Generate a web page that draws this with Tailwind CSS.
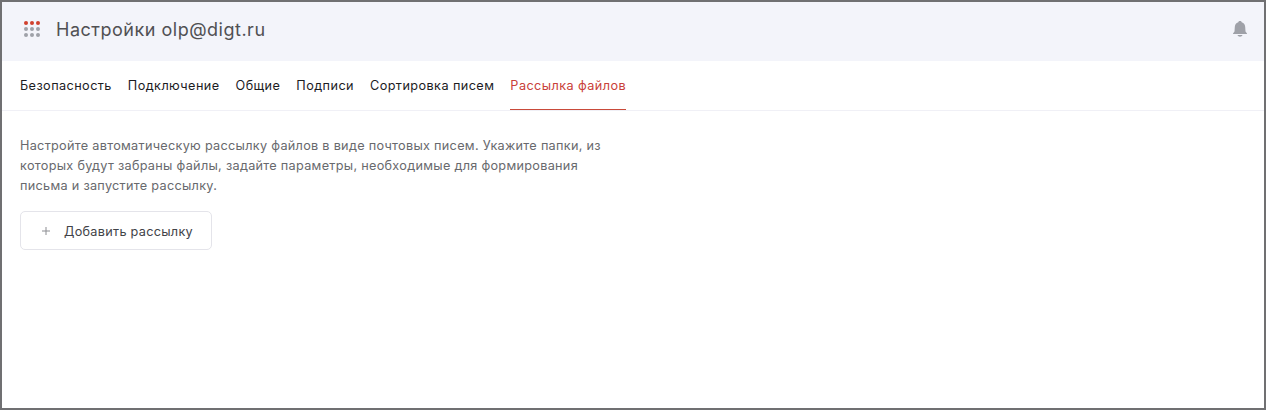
<!DOCTYPE html>
<html lang="ru"><head><meta charset="utf-8"><title>Настройки</title>
<script src="https://cdn.jsdelivr.net/npm/@tailwindcss/browser@4"></script></head>
<body class="h-screen overflow-hidden bg-white font-['Inter',sans-serif]">
<div class="h-[410px] border-2 border-[#707072]">
<header class="flex h-[59px] items-start bg-[#f3f4fa] pl-[22px] pr-[17px] pt-[19px]">
<svg class="size-4" viewBox="0 0 16 16"><g fill="#d0402e"><circle cx="2" cy="2" r="2"/><circle cx="8" cy="2" r="2"/><circle cx="14" cy="2" r="2"/></g><g fill="#9fa1a8"><circle cx="2" cy="8" r="2"/><circle cx="8" cy="8" r="2"/><circle cx="14" cy="8" r="2"/><circle cx="2" cy="14" r="2"/><circle cx="8" cy="14" r="2"/><circle cx="14" cy="14" r="2"/></g></svg>
<h1 class="-mt-[3px] ml-4 text-[18px] leading-6 tracking-[0.51px] text-[#505053]">Настройки olp@digt.ru</h1>
<svg class="ml-auto h-4 w-3.5" viewBox="0 0 14 16" fill="#9fa1a8"><path d="M7 0C6 0 5.500.5 5.300 1.200 3 1.900 1.900 3.700 1.800 6L1.500 10.500 0 12.500V13h14v-.5L12.500 10.500 12.200 6C12.100 3.700 11 1.900 8.700 1.200 8.500.5 8 0 7 0zM4.500 14c.4 1.100 1.300 1.700 2.500 1.700s2.100-.6 2.500-1.700z"/></svg>
</header>
<nav class="flex h-[50px] gap-4 border-b border-[#f0f0f6] pl-[18px] text-[12.700px] leading-[49px] tracking-[0.415px] text-[#1c1c1f]">
<a>Безопасность</a><a>Подключение</a><a>Общие</a><a>Подписи</a><a>Сортировка писем</a><a class="h-[49px] border-b border-[#c94a3a] text-[#c9413a]">Рассылка файлов</a>
</nav>
<main class="pl-[18px] pt-[25px]">
<p class="text-[12.700px] leading-5 tracking-[0.285px] text-[#68696d]">Настройте автоматическую рассылку файлов в виде почтовых писем. Укажите папки, из<br>которых будут забраны файлы, задайте параметры, необходимые для формирования<br>письма и запустите рассылку.</p>
<button class="mt-[15px] flex h-[39px] w-48 items-center rounded-[5px] border border-[#e4e4ea] pl-[21px] pt-px text-[12.700px] tracking-[0.28px] text-[#424348]"><svg class="mr-[14px] size-2" viewBox="0 0 8 8" stroke="#8c8d92"><path d="M4 0v8M0 4h8"/></svg><span class="pt-0.5">Добавить рассылку</span></button>
</main></div></body></html>
